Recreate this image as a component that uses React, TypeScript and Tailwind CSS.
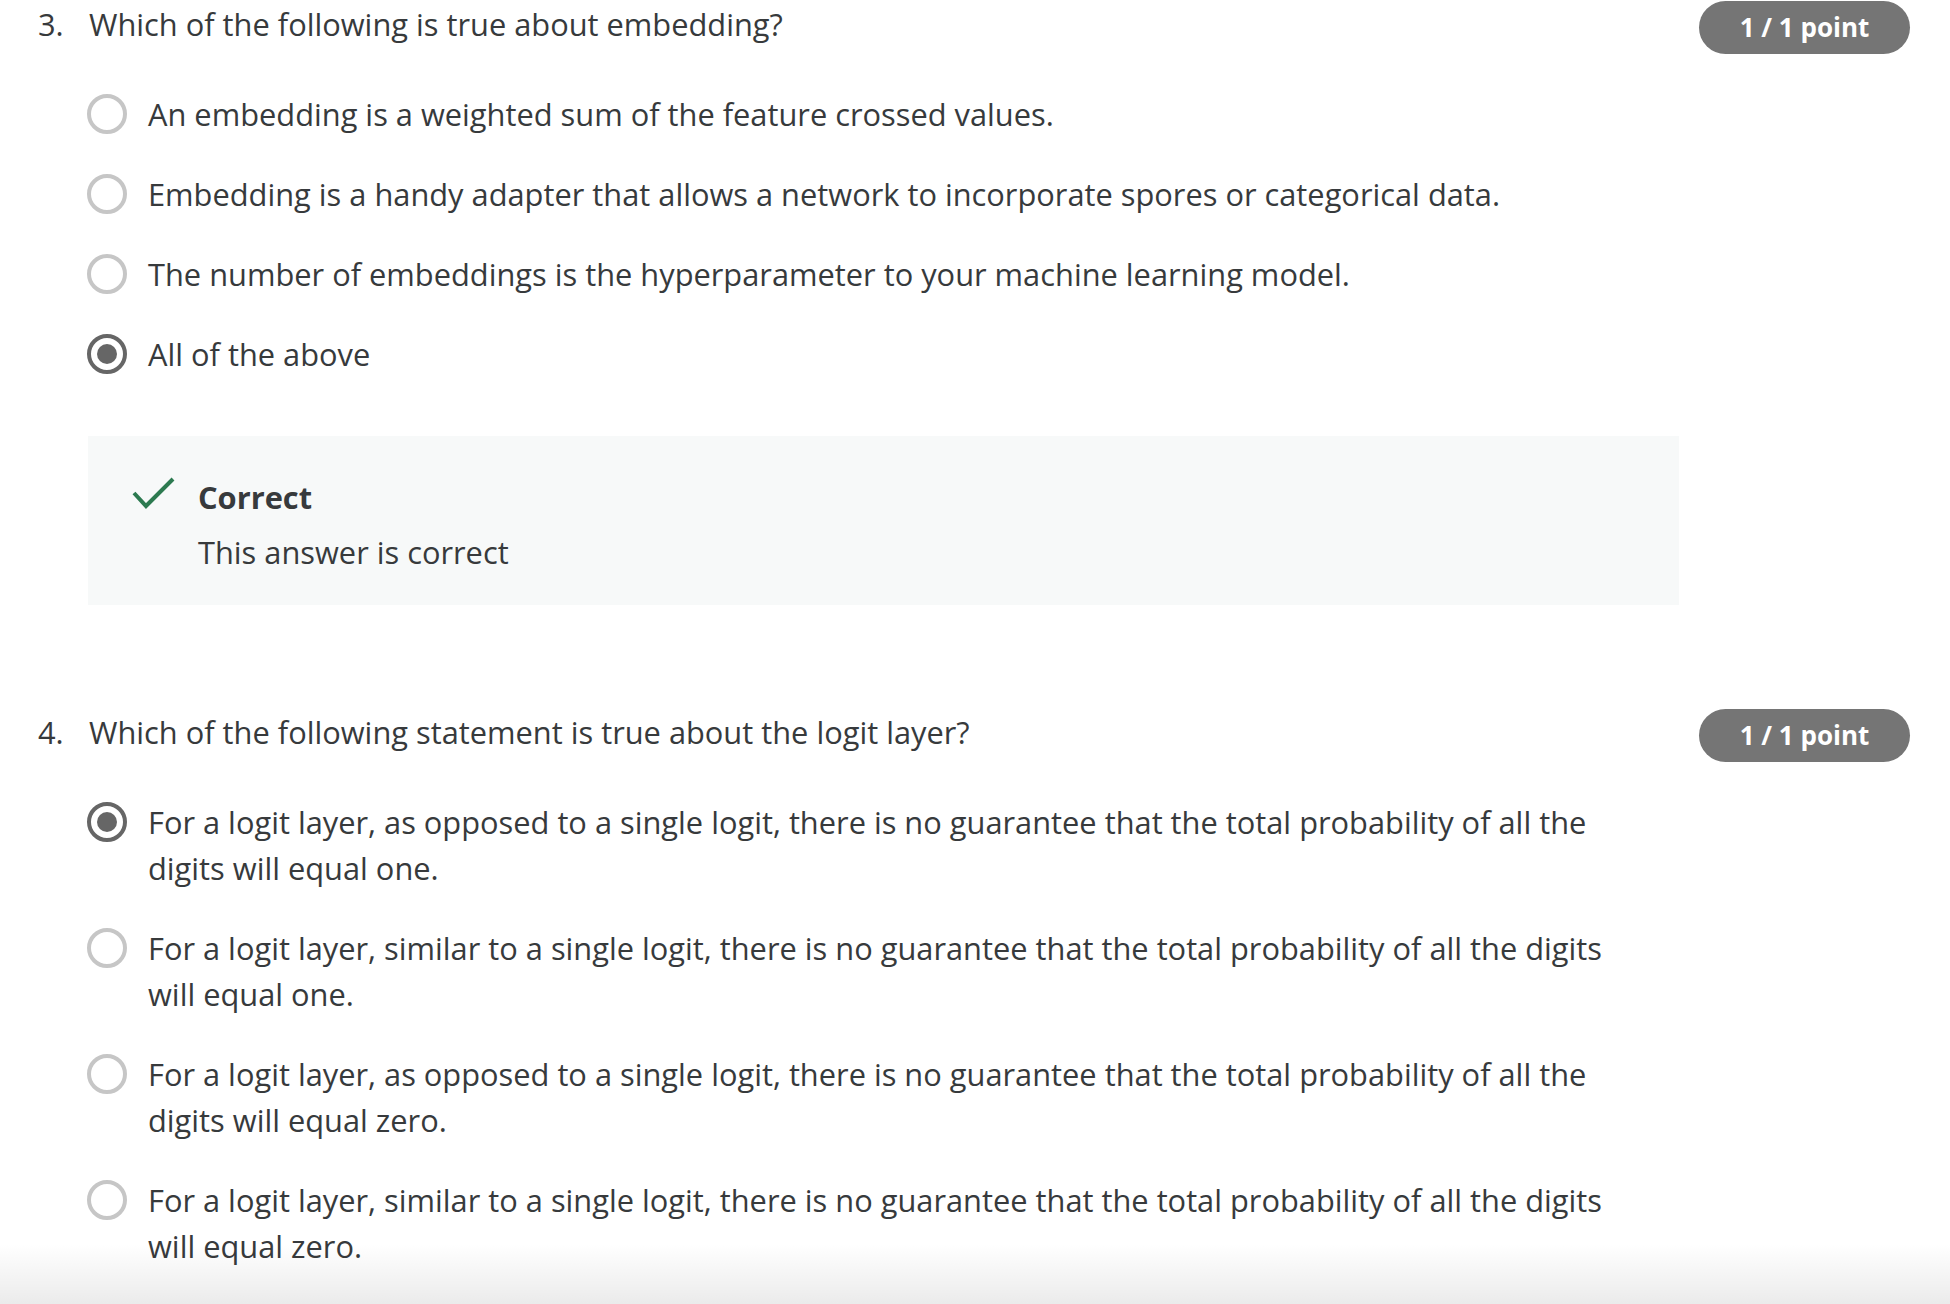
import React from "react"

type Question = {
  num: number
  text: string
  options: string[]
  selected: number
  feedback?: boolean
}

const questions: Question[] = [
  {
    num: 3,
    text: "Which of the following is true about embedding?",
    options: [
      "An embedding is a weighted sum of the feature crossed values.",
      "Embedding is a handy adapter that allows a network to incorporate spores or categorical data.",
      "The number of embeddings is the hyperparameter to your machine learning model.",
      "All of the above",
    ],
    selected: 3,
    feedback: true,
  },
  {
    num: 4,
    text: "Which of the following statement is true about the logit layer?",
    options: [
      "For a logit layer, as opposed to a single logit, there is no guarantee that the total probability of all the digits will equal one.",
      "For a logit layer, similar to a single logit, there is no guarantee that the total probability of all the digits will equal one.",
      "For a logit layer, as opposed to a single logit, there is no guarantee that the total probability of all the digits will equal zero.",
      "For a logit layer, similar to a single logit, there is no guarantee that the total probability of all the digits will equal zero.",
    ],
    selected: 0,
  },
]

function Radio({ checked }: { checked: boolean }) {
  if (checked) {
    return (
      <div className="mt-[3px] flex h-[40px] w-[40px] flex-shrink-0 items-center justify-center rounded-full border-[4px] border-[#666666]">
        <div className="h-[20px] w-[20px] rounded-full bg-[#666666]" />
      </div>
    )
  }
  return <div className="mt-[3px] h-[40px] w-[40px] flex-shrink-0 rounded-full border-[4px] border-[#c6c6c6]" />
}

function Badge() {
  return (
    <div className="flex h-[53px] w-[211px] flex-shrink-0 items-center justify-center rounded-full bg-[#757575] text-[26px] font-bold text-white">
      1 / 1 point
    </div>
  )
}

function QuestionBlock({ q }: { q: Question }) {
  return (
    <div>
      <div className="flex items-start justify-between">
        <div className="flex text-[30.8px] leading-[46px]">
          <span className="w-[51px]">{q.num}.</span>
          <span>{q.text}</span>
        </div>
        <Badge />
      </div>

      <div className="mt-[37px] flex flex-col gap-[34px] pl-[49px]">
        {q.options.map((opt, i) => (
          <div key={i} className="flex items-start gap-[21px]">
            <Radio checked={i === q.selected} />
            <p className="max-w-[1470px] text-[30.8px] leading-[46px]">{opt}</p>
          </div>
        ))}
      </div>

      {q.feedback && (
        <div className="ml-[50px] mt-[59px] w-[1591px] bg-[#f7f9f9] pb-[30px] pl-[44px] pt-[38px]">
          <div className="flex items-start gap-[22px]">
            <svg width="44" height="34" viewBox="0 0 44 34" className="mt-[3px] flex-shrink-0">
              <path d="M2 16 L14 29 L41 2" fill="none" stroke="#2c7a50" strokeWidth="4" />
            </svg>
            <div>
              <div className="text-[30.8px] font-bold leading-[46px]">Correct</div>
              <div className="mt-[9px] text-[30.8px] leading-[46px]">This answer is correct</div>
            </div>
          </div>
        </div>
      )}
    </div>
  )
}

export default function App() {
  return (
    <div
      className="relative h-[1304px] w-[1950px] overflow-hidden bg-white text-[#373a3c]"
      style={{ fontFamily: '"Open Sans", sans-serif' }}
    >
      <div className="flex flex-col gap-[104px] pl-[38px] pr-[40px] pt-[1px]">
        {questions.map((q) => (
          <QuestionBlock key={q.num} q={q} />
        ))}
      </div>
      <div className="pointer-events-none absolute bottom-0 left-0 h-[60px] w-full bg-gradient-to-b from-black/0 to-black/[0.08]" />
    </div>
  )
}
